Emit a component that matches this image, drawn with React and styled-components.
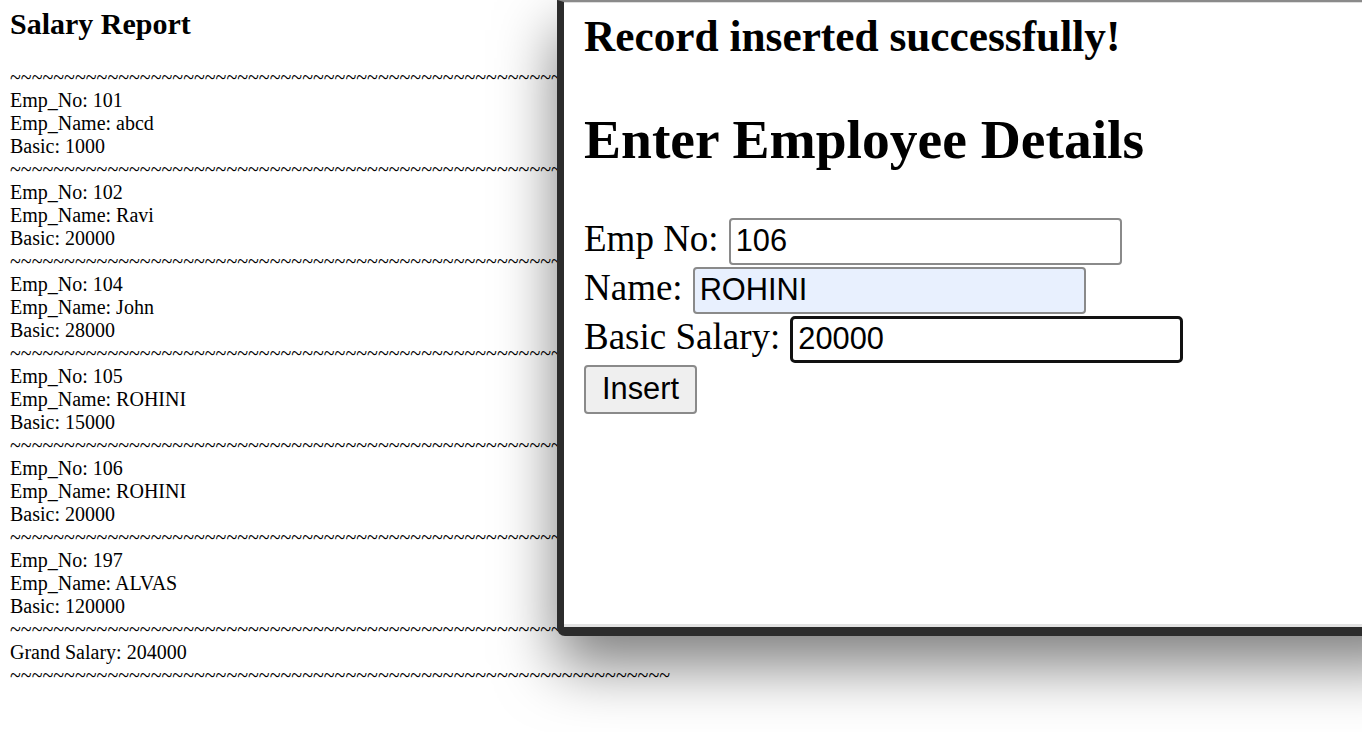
import React from "react";
import styled, { createGlobalStyle } from "styled-components";

const Global = createGlobalStyle`
  html, body { margin: 0; padding: 0; background: #fff; }
  body { overflow: hidden; font-family: "Liberation Serif", "Times New Roman", serif; color: #000; }
`;

const Page = styled.div`
  position: relative;
  width: 1362px;
  height: 732px;
  overflow: hidden;
`;

const Report = styled.div`
  padding: 7px 0 0 10px;
  font-size: 20px;
  line-height: 23px;
`;

const ReportTitle = styled.h2`
  margin: 0 0 24px;
  font-size: 30px;
  line-height: 34.5px;
  font-weight: bold;
`;

const Line = styled.div`
  white-space: nowrap;
  height: 23px;
`;

const Popup = styled.div`
  position: absolute;
  left: 557px;
  top: 0;
  width: 840px;
  height: 625px;
  background: #fff;
  border-top: 2px solid #8a8a8a;
  border-left: 7px solid #2c2c2c;
  border-bottom: 9px solid #2c2c2c;
  border-bottom-left-radius: 8px;
  box-shadow: inset 0 -3px 0 #e2e2e2, inset 0 1px 0 #dedede, 0 30px 60px rgba(0, 0, 0, 0.5);
  padding-left: 20px;
`;

const Message = styled.h3`
  margin: 10px 0 0;
  font-size: 43.3px;
  line-height: 49.8px;
  font-weight: bold;
`;

const FormTitle = styled.h2`
  margin: 46px 0 0;
  font-size: 55.5px;
  line-height: 63.8px;
  font-weight: bold;
`;

const Form = styled.form`
  margin-top: 46px;
  display: flex;
  flex-direction: column;
  align-items: flex-start;
  gap: 2px;
`;

const Row = styled.div`
  display: flex;
  align-items: baseline;
  gap: 10px;
`;

const Label = styled.span`
  font-size: 37px;
  line-height: 37px;
`;

const Input = styled.input`
  box-sizing: border-box;
  width: 393px;
  height: 47px;
  margin: 0;
  padding: 0 5px;
  font-family: "Liberation Sans", Arial, sans-serif;
  font-size: 30.8px;
  color: #000;
  background: ${(p) => (p.$autofill ? "#e8f0fe" : "#fff")};
  border: ${(p) => (p.$focused ? "3px solid #111" : "2px solid #8a8a8a")};
  border-radius: ${(p) => (p.$focused ? "5px" : "4px")};
  outline: none;
`;

const Button = styled.button`
  box-sizing: border-box;
  height: 49px;
  margin: 0;
  padding: 0 16px;
  font-family: "Liberation Sans", Arial, sans-serif;
  font-size: 30.8px;
  color: #000;
  background: #efefef;
  border: 2px solid #8a8a8a;
  border-radius: 4px;
`;

const records = [
  { no: 101, name: "abcd", basic: 1000 },
  { no: 102, name: "Ravi", basic: 20000 },
  { no: 104, name: "John", basic: 28000 },
  { no: 105, name: "ROHINI", basic: 15000 },
  { no: 106, name: "ROHINI", basic: 20000 },
  { no: 197, name: "ALVAS", basic: 120000 },
];

const tildes = "~".repeat(61);

export default function App() {
  return (
    <Page>
      <Global />
      <Report>
        <ReportTitle>Salary Report</ReportTitle>
        <Line>{tildes}</Line>
        {records.map((r) => (
          <React.Fragment key={r.no}>
            <Line>Emp_No: {r.no}</Line>
            <Line>Emp_Name: {r.name}</Line>
            <Line>Basic: {r.basic}</Line>
            <Line>{tildes}</Line>
          </React.Fragment>
        ))}
        <Line>Grand Salary: 204000</Line>
        <Line>{tildes}</Line>
      </Report>
      <Popup>
        <Message>Record inserted successfully!</Message>
        <FormTitle>Enter Employee Details</FormTitle>
        <Form onSubmit={(e) => e.preventDefault()}>
          <Row>
            <Label>Emp No:</Label>
            <Input defaultValue="106" />
          </Row>
          <Row>
            <Label>Name:</Label>
            <Input $autofill defaultValue="ROHINI" />
          </Row>
          <Row>
            <Label>Basic Salary:</Label>
            <Input $focused defaultValue="20000" />
          </Row>
          <Row>
            <Button type="submit">Insert</Button>
          </Row>
        </Form>
      </Popup>
    </Page>
  );
}
